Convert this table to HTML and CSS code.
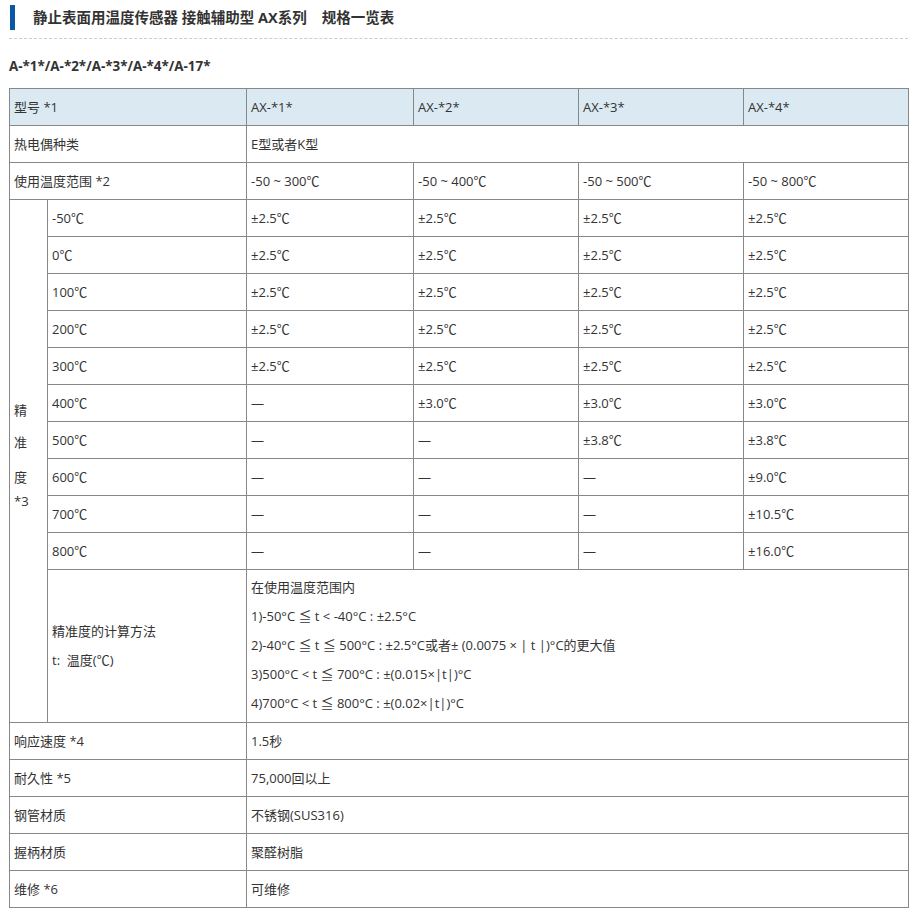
FILE: index.html
```html
<!DOCTYPE html>
<html lang="zh-CN">
<head>
<meta charset="utf-8">
<title>规格一览表</title>
<link rel="stylesheet" href="styles.css">
</head>
<body>
<div class="page">
  <div class="title-bar">
    <span class="title-mark"></span>
    <h2 class="title">静止表面用温度传感器 接触辅助型 AX系列&nbsp;&nbsp;&nbsp;&nbsp;规格一览表</h2>
  </div>
  <h3 class="subtitle">A-*1*/A-*2*/A-*3*/A-*4*/A-17*</h3>
  <table class="spec">
    <colgroup>
      <col class="c-a"><col class="c-b"><col class="c-v1"><col class="c-v"><col class="c-v"><col class="c-v">
    </colgroup>
    <tr class="head"><td colspan="2">型号 *1</td><td>AX-*1*</td><td>AX-*2*</td><td>AX-*3*</td><td>AX-*4*</td></tr>
    <tr><td colspan="2">热电偶种类</td><td colspan="4">E型或者K型</td></tr>
    <tr><td colspan="2">使用温度范围 *2</td><td>-50 ~ 300℃</td><td>-50 ~ 400℃</td><td>-50 ~ 500℃</td><td>-50 ~ 800℃</td></tr>
    <tr>
      <td rowspan="11" class="vert"><span class="v1">精</span><span class="v2">准</span><span class="v3">度</span><span class="v4">*3</span></td>
      <td>-50℃</td><td>±2.5℃</td><td>±2.5℃</td><td>±2.5℃</td><td>±2.5℃</td></tr>
    <tr><td>0℃</td><td>±2.5℃</td><td>±2.5℃</td><td>±2.5℃</td><td>±2.5℃</td></tr>
    <tr><td>100℃</td><td>±2.5℃</td><td>±2.5℃</td><td>±2.5℃</td><td>±2.5℃</td></tr>
    <tr><td>200℃</td><td>±2.5℃</td><td>±2.5℃</td><td>±2.5℃</td><td>±2.5℃</td></tr>
    <tr><td>300℃</td><td>±2.5℃</td><td>±2.5℃</td><td>±2.5℃</td><td>±2.5℃</td></tr>
    <tr><td>400℃</td><td>—</td><td>±3.0℃</td><td>±3.0℃</td><td>±3.0℃</td></tr>
    <tr><td>500℃</td><td>—</td><td>—</td><td>±3.8℃</td><td>±3.8℃</td></tr>
    <tr><td>600℃</td><td>—</td><td>—</td><td>—</td><td>±9.0℃</td></tr>
    <tr><td>700℃</td><td>—</td><td>—</td><td>—</td><td>±10.5℃</td></tr>
    <tr><td>800℃</td><td>—</td><td>—</td><td>—</td><td>±16.0℃</td></tr>
    <tr class="calc">
      <td class="calc-label">精准度的计算方法<br>t:&nbsp;&nbsp;温度(℃)</td>
      <td colspan="4" class="calc-body">在使用温度范围内<br>1)-50°C ≦ t &lt; -40°C : ±2.5°C<br>2)-40°C ≦ t ≦ 500°C : ±2.5°C或者± (0.0075 × | t |)°C的更大值<br>3)500°C &lt; t ≦ 700°C : ±(0.015×|t|)°C<br>4)700°C &lt; t ≦ 800°C : ±(0.02×|t|)°C</td>
    </tr>
    <tr><td colspan="2">响应速度 *4</td><td colspan="4">1.5秒</td></tr>
    <tr><td colspan="2">耐久性 *5</td><td colspan="4">75,000回以上</td></tr>
    <tr><td colspan="2">钢管材质</td><td colspan="4">不锈钢(SUS316)</td></tr>
    <tr><td colspan="2">握柄材质</td><td colspan="4">聚醛树脂</td></tr>
    <tr><td colspan="2">维修 *6</td><td colspan="4">可维修</td></tr>
  </table>
</div>
</body>
</html>
```

FILE: styles.css
```css
html, body {
  margin: 0;
  padding: 0;
  background: #fff;
}
body {
  font-family: "Open Sans", "Noto Sans CJK SC", "Noto Sans", sans-serif;
  color: #333;
  font-size: 13px;
}
.page {
  padding: 0 9px 0 9px;
  width: 899px;
}
.title-bar {
  display: flex;
  align-items: center;
  gap: 18px;
  height: 39px;
  border-bottom: 1px dashed #ccc;
  box-sizing: border-box;
  padding-top: 1px;
  padding-bottom: 4px;
}
.title-mark {
  display: block;
  width: 5px;
  height: 25px;
  margin-left: 1px;
  background: #0b57a4;
}
.title {
  margin: 0;
  font-size: 14.5px;
  font-weight: bold;
  color: #333;
  line-height: 20px;
}
.subtitle {
  margin: 17px 0 12px 0;
  font-size: 13.4px;
  font-weight: bold;
  color: #333;
  line-height: 20px;
}
.spec {
  border-collapse: collapse;
  table-layout: fixed;
  width: 899px;
}
.c-a { width: 38px; }
.c-b { width: 199px; }
.c-v1 { width: 167px; }
.c-v { width: 165px; }
.spec td {
  border: 1px solid #888;
  height: 37px;
  padding: 0 4px;
  box-sizing: border-box;
  vertical-align: middle;
  line-height: 20px;
  color: #333;
}
.spec tr.head td {
  background: #dbe9f2;
}
.spec td.vert {
  padding-bottom: 12px;
}
.vert span {
  display: block;
  line-height: 20px;
}
.vert .v1 { margin-bottom: 12px; }
.vert .v2 { margin-bottom: 15px; }
.vert .v3 { margin-bottom: 4px; }
.spec td.calc-label {
  line-height: 29px;
}
.spec td.calc-body {
  line-height: 29px;
  padding-top: 3px;
  padding-bottom: 4px;
  height: 152px;
}
```
